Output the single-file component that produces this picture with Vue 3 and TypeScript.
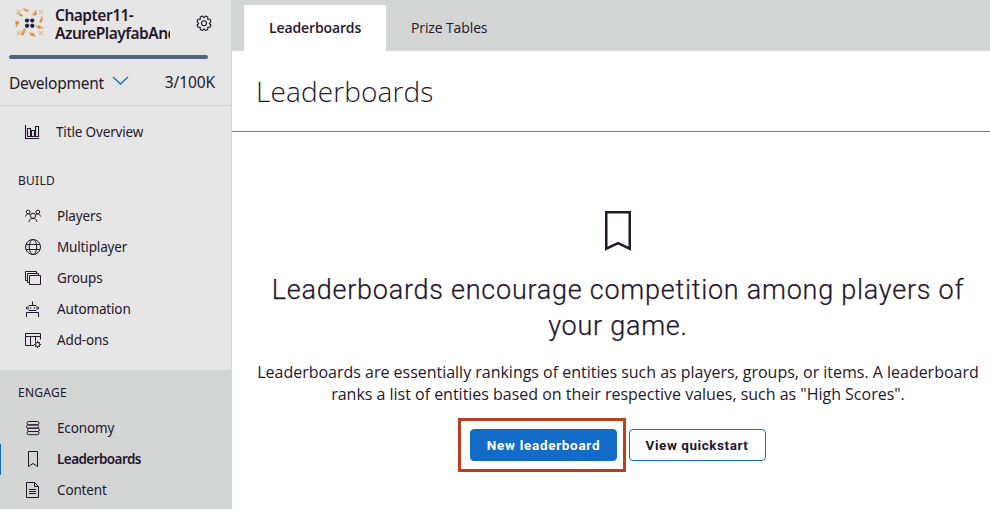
<script setup lang="ts">
interface NavItem { label: string; icon: string; active?: boolean }
interface NavSection { title: string; key: string; items: NavItem[] }

const icons: Record<string, string> = {
  overview: '<path d="M.5 1v13.500H14M2.500 4.500v8h3v-8zM6.500 6.500v6h3v-6zM10.500 2.500v10h3v-10z" stroke-width="1.100"/>',
  players: '<circle cx="3.200" cy="4" r="1.900"/><circle cx="12.800" cy="4" r="1.900"/><circle cx="8" cy="7.800" r="2.600"/><path d="M.4 8.500C1.200 5.800 4.300 5 5.600 7M15.600 8.500c-.8-2.700-3.900-3.500-5.200-1.500M4 14c.3-2.500 1.600-3.600 4-3.600s3.700 1.100 4 3.600"/>',
  globe: '<circle cx="8" cy="8" r="7.500"/><ellipse cx="8" cy="8" rx="3.700" ry="7.500"/><path d="M1.200 5.500h13.600M1.200 10.500h13.600"/>',
  groups: '<path d="M4.500 5.500h11v9h-11zM4.500 12.500h-2v-9h11v2M2.500 10.500h-2v-9h11v2"/>',
  automation: '<path d="M7.500.5v4M4 4.500h7l1 1v3l-1 1H4l-1-1v-3zM1.500 6v2M13.500 6v2M1.500 16v-4.500h12V16"/><path d="M5.500 6.500v1M9.500 6.500v1" stroke-width="1.500"/>',
  addons: '<path d="M9 13.500H.5v-12h15v6M.5 4.500h15M5.500 4.500v9M10.500 4.500v5"/><circle cx="12.500" cy="12.500" r="2"/><path d="M12.500 9v1.500M12.500 14.500V16M9 12.500h1.500M14.500 12.500H16M10 10l1 1M14 14l1 1M15 10l-1 1M11 14l-1 1"/>',
  economy: '<rect x="2" y="1.500" width="12" height="3.400" rx="1.700"/><rect x="1.500" y="4.900" width="12" height="3.300" rx="1.650"/><rect x="2.500" y="8.200" width="12" height="3.300" rx="1.650"/><rect x="2" y="11.500" width="12" height="3.200" rx="1.600"/>',
  bookmark: '<path d="M3.500.500h9v15L8 12.500l-4.500 3z"/>',
  content: '<path d="M1.500.500h8l4 4v11h-12zM9.500.500v4h4M4 7.500h7M4 9.500h7M4 11.500h7"/>',
}

const sections: NavSection[] = [
  { title: 'BUILD', key: 'build', items: [
    { label: 'Players', icon: 'players' },
    { label: 'Multiplayer', icon: 'globe' },
    { label: 'Groups', icon: 'groups' },
    { label: 'Automation', icon: 'automation' },
    { label: 'Add-ons', icon: 'addons' },
  ] },
  { title: 'ENGAGE', key: 'engage', items: [
    { label: 'Economy', icon: 'economy' },
    { label: 'Leaderboards', icon: 'bookmark', active: true },
    { label: 'Content', icon: 'content' },
  ] },
]
</script>

<template>
  <div class="app">
    <aside class="sidebar">
      <header class="title-card">
        <div class="identity">
          <svg class="logo" width="30" height="30" viewBox="0 0 30 30">
            <g fill="#dda765">
              <path d="M8 0l6 2-1 2-4-1z" /><path d="M21 1l1 5-2 2-3-1 2-3z" />
              <path d="M0 5l4 0 4 2-1 2z" /><path d="M27 7l1 5-2 3-2-1z" />
              <path d="M0 13l4 0v3l-3 4z" /><path d="M20 18l4-1 5 3-5 1z" />
              <path d="M9 20l2 1-1 4-3 3-1-3z" /><path d="M14 24l5 1 2 4-5-1z" />
            </g>
            <g fill="none" stroke="#dfc3a0" stroke-width="1.500">
              <path d="M2 2l4 4M6 2L2 6M24 2l4 4M28 2l-4 4M2 23l4 4M6 23l-4 4M24 23l4 4M28 23l-4 4" />
            </g>
            <g fill="#cf672e"><circle cx="6" cy="7.500" r=".8" /><circle cx="20.500" cy="6" r=".8" /><circle cx="26" cy="13" r=".8" /><circle cx="2" cy="15" r=".8" /><circle cx="8" cy="26" r=".8" /><circle cx="24" cy="19.500" r=".8" /><circle cx="17" cy="26.500" r=".8" /></g>
            <path d="M12 12h5v5h-5z" fill="none" stroke="#9fc0d6" />
            <g fill="#1f2038"><circle cx="12" cy="12.500" r="2.100" /><circle cx="17.300" cy="12.500" r="2.100" /><circle cx="12" cy="17.800" r="2.100" /><circle cx="17.300" cy="17.800" r="2.100" /></g>
          </svg>
          <div class="name"><div>Chapter11-</div><div>AzurePlayfabAnd</div></div>
          <svg class="gear" width="18" height="18" viewBox="0 0 18 18">
            <path d="M7.500 1l1.500 1.700L10.500 1l2.300 1-.1 2.300 2.300-.1 1 2.300L14.300 8.500 16 10l-1 2.300-2.300-.1.100 2.300-2.300 1L9 13.800l-1.500 1.700-2.300-1 .1-2.300-2.300.1L2 10l1.700-1.500L2 6.500l1-2.300 2.300.1L5.200 2z" />
            <circle cx="9" cy="8.300" r="2.500" />
          </svg>
        </div>
        <div class="usage"></div>
        <div class="environment">
          <span class="env">Development</span>
          <svg width="17" height="10" viewBox="0 0 17 10"><path d="M1 1l7.500 7L16 1" /></svg>
          <span class="count">3/100K</span>
        </div>
      </header>
      <nav>
        <a class="item overview"><svg class="icon" width="16" height="16" viewBox="0 0 16 16" v-html="icons.overview"></svg><span>Title Overview</span></a>
        <section v-for="s in sections" :key="s.key" :class="s.key">
          <h2>{{ s.title }}</h2>
          <a v-for="i in s.items" :key="i.label" class="item" :class="{ active: i.active }">
            <svg class="icon" width="16" height="16" viewBox="0 0 16 16" v-html="icons[i.icon]"></svg><span>{{ i.label }}</span>
          </a>
        </section>
      </nav>
    </aside>
    <main>
      <div class="tabs"><a class="tab selected"><span>Leaderboards</span></a><a class="tab"><span>Prize Tables</span></a></div>
      <div class="page-title"><h1>Leaderboards</h1></div>
      <div class="empty">
        <svg class="mark" width="26" height="40" viewBox="0 0 26 40"><path d="M1.250 1.250h23.500v36.500L13 32.200 1.250 37.750z" /></svg>
        <h3>Leaderboards encourage competition among players of<br>your game.</h3>
        <p>Leaderboards are essentially rankings of entities such as players, groups, or items. A leaderboard<br>ranks a list of entities based on their respective values, such as "High Scores".</p>
        <div class="actions">
          <div class="highlight"><button class="primary"><span>New leaderboard</span></button></div>
          <button class="secondary"><span>View quickstart</span></button>
        </div>
      </div>
    </main>
  </div>
</template>

<style>
body { margin: 0; overflow: hidden; }
</style>

<style scoped>
* { box-sizing: border-box; }
.app { display: flex; width: 990px; height: 509px; overflow: hidden; background: #fff; color: #24172b; font-family: "Open Sans", "Noto Sans", sans-serif; white-space: nowrap; }
.sidebar { width: 232px; flex: none; background: #e6e6e6; border-right: 1px solid #d4d6d5; font-family: "Noto Sans", sans-serif; }
.title-card { height: 106px; border-bottom: 1px solid #d0d2d1; }
.identity { display: flex; height: 55px; padding: 6px 0 0 15px; }
.logo { margin-top: 2px; flex: none; }
.name { width: 116px; margin-left: 9px; padding-left: 1px; overflow: hidden; font-size: 15.500px; line-height: 18px; font-weight: 600; height: 38px; letter-spacing: -.5px; }
.gear { margin: 9px 0 0 25px; fill: none; stroke: #24172b; stroke-width: 1.100; stroke-linejoin: round; }
.usage { width: 199px; height: 4px; margin-left: 9px; border-radius: 2px; background: #52637f; }
.environment { display: flex; align-items: flex-start; padding: 12px 16px 0 9px; font-size: 15.500px; line-height: 22px; }
.environment svg { margin: 5px 0 0 8px; fill: none; stroke: #126bbd; stroke-width: 1.300; }
.env { padding-top: 1px; letter-spacing: -.25px; }
.count { margin-left: auto; letter-spacing: -.1px; }
.item { display: flex; align-items: center; height: 31px; padding-left: 25px; font-size: 13.500px; letter-spacing: -.15px; }
.item span { margin-left: 16px; padding-bottom: 1px; }
.icon { flex: none; fill: none; stroke: #24172b; stroke-width: 1; overflow: visible; margin-bottom: 1px; }
.overview { margin-top: 11px; }
.overview span { margin-left: 15px; }
h2 { margin: 0; padding-left: 18px; font-size: 12px; line-height: 16px; font-weight: 400; letter-spacing: .25px; }
.build { height: 222px; padding-top: 25px; }
.build h2 { margin-bottom: 12px; }
.engage { height: 139px; padding-top: 15px; background: #d4d6d5; }
.engage h2 { margin-bottom: 12px; }
.active { font-weight: 600; letter-spacing: -.57px; border-left: 1px solid #126bc6; padding-left: 24px; }
main { flex: 1; min-width: 0; }
.tabs { display: flex; height: 51px; padding: 5px 0 0 12px; background: #d4d6d5; }
.tab { width: 142px; height: 46px; padding-left: 25px; line-height: 46px; font-size: 14px; letter-spacing: -.12px; }
.selected { background: #fff; font-weight: 600; }
.page-title { height: 81px; border-bottom: 1px solid #6c819b; padding-left: 24px; }
h1 { margin: 0; font-size: 28px; line-height: 81px; font-weight: 300; letter-spacing: .12px; }
.empty { display: flex; flex-direction: column; align-items: center; padding-top: 79px; margin-left: 13px; width: 746px; }
.mark { fill: none; stroke: #24172b; stroke-width: 2.500; }
h3 { margin: 21px 0 0; font-family: Roboto, sans-serif; font-size: 27px; line-height: 36px; font-weight: 300; text-align: center; letter-spacing: .75px; -webkit-text-stroke: .25px #24172b; }
p { margin: 17px 0 0; font-size: 16px; line-height: 22px; text-align: center; letter-spacing: -.015px; }
.actions { display: flex; align-items: center; margin: 13px 0 0 -13px; gap: 3px; }
.highlight { padding: 8px 6px 8px 9px; border: 3px solid #be3d1b; height: 54px; }
button { display: block; height: 32px; padding: 0; border-radius: 4px; border: 1px solid #126bc6; font: 700 13.500px/30px Roboto, sans-serif; letter-spacing: .7px; color: #24172b; background: #fff; }
.primary { width: 147px; height: 32px; background: #126bc6; color: #fff; }
.primary span { margin-left: 1px; }
.secondary { width: 137px; letter-spacing: .55px; }
</style>
